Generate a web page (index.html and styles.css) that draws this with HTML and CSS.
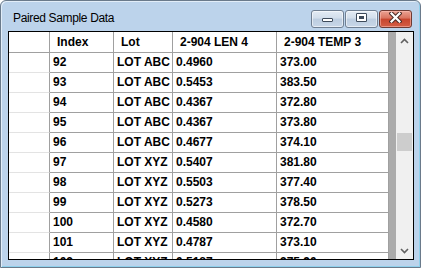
FILE: index.html
```html
<!DOCTYPE html>
<html>
<head>
<meta charset="utf-8">
<link rel="stylesheet" href="styles.css">
</head>
<body>
<div class="window">
  <div class="titlebar">
    <span class="title">Paired Sample Data</span>
    <div class="controls">
      <div class="btn"><span class="glyph-min"></span></div>
      <div class="btn"><span class="glyph-max"></span></div>
      <div class="btn close">
        <svg width="13" height="11" viewBox="0 0 13 11">
          <path d="M2.5 1.5 L10.5 9.5 M10.5 1.5 L2.5 9.5" stroke="#4a2a26" stroke-width="4.2" stroke-linecap="square"/>
          <path d="M2.5 1.5 L10.5 9.5 M10.5 1.5 L2.5 9.5" stroke="#ffffff" stroke-width="2.2" stroke-linecap="square"/>
        </svg>
      </div>
    </div>
  </div>
  <div class="client">
    <div class="grid">
      <div class="row head"><div class="rh"></div><div class="c">Index</div><div class="c">Lot</div><div class="c">2-904 LEN 4</div><div class="c">2-904 TEMP 3</div></div>
      <div class="row"><div class="rh"></div><div class="c">92</div><div class="c">LOT ABC</div><div class="c">0.4960</div><div class="c">373.00</div></div>
      <div class="row"><div class="rh"></div><div class="c">93</div><div class="c">LOT ABC</div><div class="c">0.5453</div><div class="c">383.50</div></div>
      <div class="row"><div class="rh"></div><div class="c">94</div><div class="c">LOT ABC</div><div class="c">0.4367</div><div class="c">372.80</div></div>
      <div class="row"><div class="rh"></div><div class="c">95</div><div class="c">LOT ABC</div><div class="c">0.4367</div><div class="c">373.80</div></div>
      <div class="row"><div class="rh"></div><div class="c">96</div><div class="c">LOT ABC</div><div class="c">0.4677</div><div class="c">374.10</div></div>
      <div class="row"><div class="rh"></div><div class="c">97</div><div class="c">LOT XYZ</div><div class="c">0.5407</div><div class="c">381.80</div></div>
      <div class="row"><div class="rh"></div><div class="c">98</div><div class="c">LOT XYZ</div><div class="c">0.5503</div><div class="c">377.40</div></div>
      <div class="row"><div class="rh"></div><div class="c">99</div><div class="c">LOT XYZ</div><div class="c">0.5273</div><div class="c">378.50</div></div>
      <div class="row"><div class="rh"></div><div class="c">100</div><div class="c">LOT XYZ</div><div class="c">0.4580</div><div class="c">372.70</div></div>
      <div class="row"><div class="rh"></div><div class="c">101</div><div class="c">LOT XYZ</div><div class="c">0.4787</div><div class="c">373.10</div></div>
      <div class="row"><div class="rh"></div><div class="c">102</div><div class="c">LOT XYZ</div><div class="c">0.5187</div><div class="c">375.90</div></div>
    </div>
    <div class="gutter"></div>
    <div class="scrollbar">
      <div class="arrow">
        <svg width="9" height="6" viewBox="0 0 9 6"><path d="M1 5 L4.5 1.5 L8 5" fill="none" stroke="#606060" stroke-width="1.6"/></svg>
      </div>
      <div class="track"><div class="thumb"></div></div>
      <div class="arrow">
        <svg width="9" height="6" viewBox="0 0 9 6"><path d="M1 1 L4.5 4.5 L8 1" fill="none" stroke="#606060" stroke-width="1.6"/></svg>
      </div>
    </div>
  </div>
</div>
</body>
</html>
```
FILE: styles.css
```css
html, body {
  margin: 0;
  padding: 0;
  background: #ffffff;
}

.window {
  box-sizing: border-box;
  width: 421px;
  height: 268px;
  border: 1px solid #6a7a8b;
  border-radius: 6px 6px 0 0;
  background: #bcd3eb;
  box-shadow: inset 1px 1px 0 #e2edf8, inset -1px -1px 0 #8fd0ec;
  padding: 0 6px 7px 7px;
  display: flex;
  flex-direction: column;
  font-family: "Liberation Sans", Arial, sans-serif;
}

.titlebar {
  height: 30px;
  display: flex;
  align-items: flex-start;
  justify-content: space-between;
}

.title {
  padding: 10px 0 0 5px;
  font-size: 12px;
  line-height: 15px;
  letter-spacing: -0.35px;
  color: #000000;
}

.controls {
  display: flex;
  gap: 1px;
  margin: 9px 2px 0 0;
}

.btn {
  box-sizing: border-box;
  width: 33px;
  height: 18px;
  border: 1px solid #6f7f92;
  border-radius: 3px;
  background: linear-gradient(#e3ebf4 0%, #d2deeb 45%, #bccde0 50%, #c8d7e8 100%);
  box-shadow: inset 0 0 0 1px rgba(255, 255, 255, 0.55);
  display: flex;
  justify-content: center;
  align-items: flex-start;
}

.glyph-min {
  box-sizing: border-box;
  width: 11px;
  height: 4px;
  margin-top: 7px;
  background: #ffffff;
  border: 1px solid #3d4a5a;
  border-radius: 1px;
}

.glyph-max {
  box-sizing: border-box;
  width: 11px;
  height: 9px;
  margin-top: 2px;
  border: 1px solid #3d4a5a;
  background: #3d4a5a;
  box-shadow: inset 0 0 0 2px #ffffff;
  border-radius: 1px;
}

.btn.close {
  border-color: #6e3a33;
  background: linear-gradient(#eba293 0%, #d9735f 45%, #c7452d 50%, #d45d44 100%);
  box-shadow: inset 0 0 0 1px rgba(255, 200, 190, 0.5);
}

.btn.close svg {
  margin-top: 1px;
}

.client {
  box-sizing: border-box;
  height: 229px;
  border: 1px solid #000000;
  background: #ffffff;
  display: flex;
  overflow: hidden;
}

.grid {
  width: 380px;
  background: #ababab;
  overflow: hidden;
  font-size: 12px;
  font-weight: bold;
  color: #000000;
}

.row {
  display: grid;
  grid-template-columns: 41px 64px 59px 104px 112px;
  height: 20px;
}

.row.head {
  height: 21px;
}

.c, .rh {
  box-sizing: border-box;
  background: #ffffff;
  border-right: 1px solid #a0a0a0;
  border-bottom: 1px solid #a0a0a0;
  line-height: 19px;
  padding-left: 3px;
  white-space: nowrap;
  overflow: hidden;
}

.rh {
  border-bottom-color: #e3e3e3;
}

.head .c, .head .rh {
  line-height: 20px;
  padding-left: 7px;
  border-bottom-color: #a0a0a0;
}

.gutter {
  width: 7px;
  background: #ababab;
}

.scrollbar {
  width: 17px;
  background: #f0f0f0;
  display: flex;
  flex-direction: column;
}

.arrow {
  height: 17px;
  display: flex;
  align-items: center;
  justify-content: center;
}

.track {
  flex: 1;
}

.thumb {
  height: 18px;
  margin: 84px 1px 0 1px;
  background: #cdcdcd;
}
```
